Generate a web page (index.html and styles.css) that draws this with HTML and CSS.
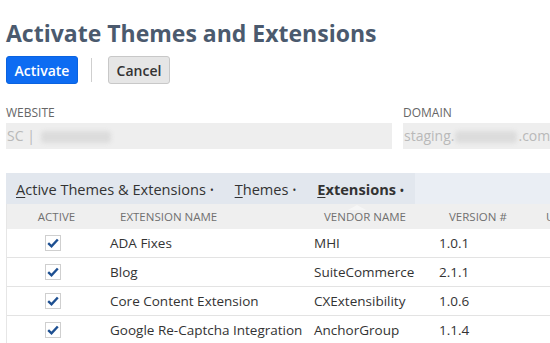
FILE: index.html
```html
<!DOCTYPE html>
<html>
<head>
<meta charset="utf-8">
<link rel="stylesheet" href="styles.css">
</head>
<body>
<div class="page">
  <h1 class="title">Activate Themes and Extensions</h1>
  <div class="actions">
    <button class="btn btn-primary">Activate</button>
    <span class="sep"></span>
    <button class="btn btn-secondary">Cancel</button>
  </div>
  <div class="fields">
    <div class="field field-website">
      <div class="label">WEBSITE</div>
      <div class="input">SC |<span class="blur blur-w"></span></div>
    </div>
    <div class="field field-domain">
      <div class="label">DOMAIN</div>
      <div class="input">staging.<span class="blur blur-d"></span>.com</div>
    </div>
  </div>
  <div class="tabs">
    <div class="tablist">
      <span class="tab"><u>A</u>ctive Themes &amp; Extensions<span class="dot">•</span></span>
      <span class="tab"><u>T</u>hemes<span class="dot">•</span></span>
      <span class="tab tab-active"><u>E</u>xtensions<span class="dot">•</span><span class="caret"></span></span>
    </div>
  </div>
  <div class="table">
    <div class="row head">
      <div class="c c-active">ACTIVE</div>
      <div class="c c-name">EXTENSION NAME</div>
      <div class="c c-vendor">VENDOR NAME</div>
      <div class="c c-ver">VERSION #</div>
      <div class="c c-more">U</div>
    </div>
    <div class="row">
      <div class="c c-active"><span class="cb"><svg viewBox="0 0 12 10" width="12" height="10"><path d="M1.2 5.2 L4.5 8.3 L10.8 1.5" fill="none" stroke="#1d4f91" stroke-width="2.4"/></svg></span></div>
      <div class="c c-name">ADA Fixes</div>
      <div class="c c-vendor">MHI</div>
      <div class="c c-ver">1.0.1</div>
      <div class="c c-more"></div>
    </div>
    <div class="row">
      <div class="c c-active"><span class="cb"><svg viewBox="0 0 12 10" width="12" height="10"><path d="M1.2 5.2 L4.5 8.3 L10.8 1.5" fill="none" stroke="#1d4f91" stroke-width="2.4"/></svg></span></div>
      <div class="c c-name">Blog</div>
      <div class="c c-vendor">SuiteCommerce</div>
      <div class="c c-ver">2.1.1</div>
      <div class="c c-more"></div>
    </div>
    <div class="row">
      <div class="c c-active"><span class="cb"><svg viewBox="0 0 12 10" width="12" height="10"><path d="M1.2 5.2 L4.5 8.3 L10.8 1.5" fill="none" stroke="#1d4f91" stroke-width="2.4"/></svg></span></div>
      <div class="c c-name">Core Content Extension</div>
      <div class="c c-vendor">CXExtensibility</div>
      <div class="c c-ver">1.0.6</div>
      <div class="c c-more"></div>
    </div>
    <div class="row">
      <div class="c c-active"><span class="cb"><svg viewBox="0 0 12 10" width="12" height="10"><path d="M1.2 5.2 L4.5 8.3 L10.8 1.5" fill="none" stroke="#1d4f91" stroke-width="2.4"/></svg></span></div>
      <div class="c c-name">Google Re-Captcha Integration</div>
      <div class="c c-vendor">AnchorGroup</div>
      <div class="c c-ver">1.1.4</div>
      <div class="c c-more"></div>
    </div>
  </div>
</div>
</body>
</html>
```
FILE: styles.css
```css
* { box-sizing: border-box; }
html, body { margin: 0; padding: 0; background: #fff; overflow: hidden; }
body { font-family: "Open Sans", "Liberation Sans", sans-serif; color: #333; width: 550px; height: 343px; }
.page { padding: 16px 0 0 6px; width: 560px; }
.title { margin: 0; font-size: 23px; line-height: 34px; font-weight: 700; color: #4b5a6e; }
.actions { display: flex; align-items: center; margin-top: 6px; height: 28px; }
.btn { font-family: inherit; font-size: 14px; height: 28px; border-radius: 3px; padding: 0; cursor: pointer; }
.btn-primary { width: 72px; background: #0d6cf2; color: #fff; border: 1px solid #0a63e0; font-weight: 600; }
.sep { width: 1px; height: 24px; background: #cfcfcf; margin: 0 16px 0 13px; }
.btn-secondary { width: 62px; background: #e6e6e6; color: #333; border: 1px solid #c8c8c8; font-weight: 600; }
.fields { display: flex; gap: 11px; margin-top: 21px; }
.field-website { width: 386px; }
.field-domain { flex: 1; }
.label { font-size: 12px; line-height: 16px; color: #666; }
.input { margin-top: 2px; height: 26px; background: #eeeeee; color: #b9b9b9; font-size: 14px; line-height: 26px; padding-left: 1px; white-space: nowrap; overflow: hidden; }
.blur { display: inline-block; vertical-align: middle; height: 12px; background: #dcdcdc; filter: blur(2px); border-radius: 4px; }
.blur-w { width: 70px; margin-left: 6px; }
.blur-d { width: 62px; margin: 0 1px; }
.tabs { margin-top: 24px; height: 31px; background: #eaeef4; }
.tablist { display: inline-flex; height: 31px; background: #e2e7ee; align-items: center; padding-left: 10px; width: 409px; }
.tab { position: relative; font-size: 14.6px; color: #333; margin-right: 21px; white-space: nowrap; }
.tab u { text-decoration: underline; text-underline-offset: 2px; }
.tab .dot { font-size: 10px; margin-left: 4px; position: relative; top: -1px; }
.tab-active { font-weight: 700; }
.caret { position: absolute; left: 31px; bottom: -11px; width: 0; height: 0; border-left: 9px solid transparent; border-right: 9px solid transparent; border-bottom: 5px solid #f6f6f6; }
.table { border-left: 1px solid #e6e6e6; }
.row { display: flex; height: 29px; align-items: center; border-bottom: 1px solid #e3e3e3; font-size: 13.5px; color: #333; }
.row.head { height: 25px; background: #efefef; border-bottom: none; font-size: 11.5px; color: #707070; }
.c { white-space: nowrap; }
.c-active { width: 103px; display: flex; justify-content: center; padding-right: 12px; }
.c-name { width: 204px; }
.c-vendor { width: 125px; }
.c-ver { width: 98px; }
.head .c-name, .head .c-vendor, .head .c-ver { padding-left: 10px; }
.head .c-more { padding-left: 9px; }
.head .c-active { padding-right: 4px; }
.cb { width: 16px; height: 16px; border: 1px solid #cfcfcf; background: #fff; display: flex; align-items: center; justify-content: center; }
```
